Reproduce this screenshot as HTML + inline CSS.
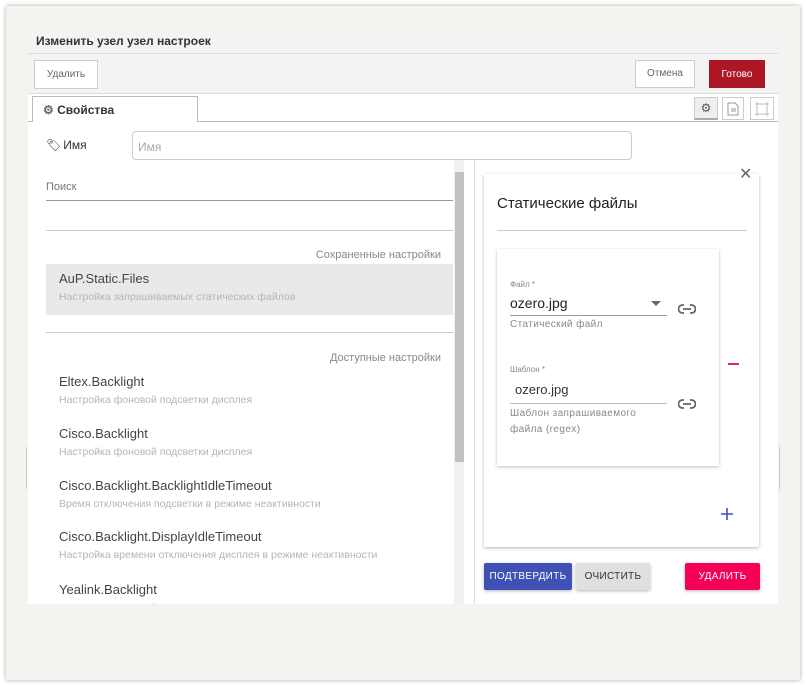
<!DOCTYPE html>
<html><head><meta charset="utf-8"><style>
*{box-sizing:border-box;margin:0;padding:0}
body{width:806px;height:685px;background:#fff;font-family:"Liberation Sans",Arial,sans-serif;position:relative;overflow:hidden}
.abs{position:absolute}
.frame{left:6px;top:6px;width:794px;height:674px;background:#f4f3f0;box-shadow:0 0 4px rgba(0,0,0,.35)}
.hdr{left:28px;top:26px;width:750px;height:28px;background:#f3f3f3;border-bottom:1px solid #ddd;font-size:12px;font-weight:bold;color:#333;padding:8px 0 0 8px}
.bar{left:28px;top:54px;width:750px;height:40px;background:#f3f3f3;border-bottom:1px solid #ddd}
.btn{position:absolute;background:#fff;border:1px solid #ccc;font-size:10px;color:#666;text-align:center}
.tabs{left:28px;top:94px;width:750px;height:28px;background:#fff;border-bottom:1px solid #bbb}
.content{left:28px;top:122px;width:750px;height:482px;background:#fff}
.item{position:absolute;left:59px}
.item .t{font-size:13px;color:#444}
.item .s{font-size:10.5px;color:#b5b5b5;margin-top:5px}
.rb{position:absolute;height:27px;border-radius:2px;font-size:10px;font-weight:bold;text-align:center;line-height:27px;box-shadow:0 1px 3px rgba(0,0,0,.3);letter-spacing:.3px}
</style></head><body>
<div class="abs frame"></div>
<div class="abs hdr">Изменить узел узел настроек</div>
<div class="abs bar"></div>
<div class="btn" style="left:34px;top:60px;width:64px;height:29px;line-height:27px">Удалить</div>
<div class="btn" style="left:635px;top:60px;width:60px;height:28px;line-height:26px">Отмена</div>
<div class="btn" style="left:709px;top:60px;width:56px;height:28px;line-height:28px;background:#ad1625;border-color:#ad1625;color:#fff">Готово</div>
<div class="abs tabs"></div>
<div class="abs" style="left:32px;top:96px;width:166px;height:27px;background:#fff;border:1px solid #bbb;border-bottom:none;font-size:12px;font-weight:bold;color:#333;padding:6px 0 0 10px"><span style="color:#666">⚙</span> Свойства</div>
<div class="btn" style="left:694px;top:97px;width:24px;height:23px;background:#eee;line-height:21px;color:#555;font-size:12px;border-bottom:2px solid #aaa">⚙</div>
<div class="btn" style="left:722px;top:97px;width:22px;height:23px"><svg width="12" height="14" style="margin-top:4px" viewBox="0 0 12 14"><path d="M1 1h7l3 3v9H1z M4 7h5M4 9h5" fill="none" stroke="#999"/></svg></div>
<div class="btn" style="left:750px;top:97px;width:24px;height:23px"><svg width="14" height="14" style="margin-top:4px" viewBox="0 0 14 14"><rect x="2" y="2" width="10" height="10" fill="none" stroke="#999"/><path d="M0 2h14M0 12h14M2 0v14M12 0v14" stroke="#bbb"/></svg></div>
<div class="abs content"></div>
<div class="abs" style="left:46px;top:138px;font-size:12px;color:#333">🏷︎<span style="margin-left:2px">Имя</span></div>
<div class="abs" style="left:132px;top:131px;width:500px;height:29px;border:1px solid #ccc;border-radius:4px;font-size:12px;color:#aaa;padding:8px 0 0 5px">Имя</div>
<div class="abs" style="left:46px;top:181px;font-size:11px;color:#777">Поиск</div>
<div class="abs" style="left:46px;top:200px;width:407px;border-top:1px solid #999"></div>
<div class="abs" style="left:46px;top:230px;width:407px;border-top:1px solid #ccc"></div>
<div class="abs" style="right:365px;top:249px;font-size:11px;color:#888">Сохраненные настройки</div>
<div class="abs" style="left:46px;top:264px;width:407px;height:51px;background:#e9e9e9"></div>
<div class="item" style="top:271px"><div class="t">AuP.Static.Files</div><div class="s">Настройка запрашиваемых статических файлов</div></div>
<div class="abs" style="left:46px;top:332px;width:408px;border-top:1px solid #ccc"></div>
<div class="abs" style="right:365px;top:352px;font-size:11px;color:#888">Доступные настройки</div>
<div class="item" style="top:374px"><div class="t">Eltex.Backlight</div><div class="s">Настройка фоновой подсветки дисплея</div></div>
<div class="item" style="top:426px"><div class="t">Cisco.Backlight</div><div class="s">Настройка фоновой подсветки дисплея</div></div>
<div class="item" style="top:478px"><div class="t">Cisco.Backlight.BacklightIdleTimeout</div><div class="s">Время отключения подсветки в режиме неактивности</div></div>
<div class="item" style="top:529px"><div class="t">Cisco.Backlight.DisplayIdleTimeout</div><div class="s">Настройка времени отключения дисплея в режиме неактивности</div></div>
<div class="item" style="top:582px"><div class="t">Yealink.Backlight</div><div class="s">Настройка фоновой подсветки дисплея</div></div>
<div class="abs" style="left:28px;top:604px;width:750px;height:76px;background:#f4f3f0"></div>
<div class="abs" style="left:454px;top:160px;width:10px;height:444px;background:#f1f1f1"></div>
<div class="abs" style="left:455px;top:172px;width:9px;height:290px;background:#c1c1c1"></div>
<div class="abs" style="left:474px;top:160px;height:444px;border-left:1px solid #ddd"></div>
<div class="abs" style="left:26px;top:447px;height:42px;border-left:1px solid #ccc"></div>
<div class="abs" style="left:779px;top:447px;height:42px;border-left:1px solid #ccc"></div>
<div class="abs" style="left:484px;top:174px;width:275px;height:373px;background:#fff;box-shadow:0 1px 3px rgba(0,0,0,.3);border-radius:2px"></div>
<div class="abs" style="left:739px;top:164px;font-size:16px;color:#666">✕</div>
<div class="abs" style="left:497px;top:195px;font-size:15px;color:#222">Статические файлы</div>
<div class="abs" style="left:497px;top:230px;width:250px;border-top:1px solid #ccc"></div>
<div class="abs" style="left:497px;top:249px;width:222px;height:217px;background:#fff;box-shadow:0 1px 3px rgba(0,0,0,.25)"></div>
<div class="abs" style="left:510px;top:280px;font-size:8px;color:#888">Файл *</div>
<div class="abs" style="left:510px;top:295px;font-size:14px;color:#222">ozero.jpg</div>
<div class="abs" style="left:651px;top:301px;width:0;height:0;border-left:5px solid transparent;border-right:5px solid transparent;border-top:5px solid #666"></div>
<div class="abs" style="left:510px;top:315px;width:157px;border-top:1px solid #999"></div>
<div class="abs" style="left:510px;top:319px;font-size:10px;color:#888;letter-spacing:.4px">Статический файл</div>
<div class="abs" style="left:510px;top:365px;font-size:8px;color:#888">Шаблон *</div>
<div class="abs" style="left:515px;top:382px;font-size:13px;color:#333">ozero.jpg</div>
<div class="abs" style="left:510px;top:403px;width:157px;border-top:1px solid #bbb"></div>
<div class="abs" style="left:510px;top:406px;font-size:10px;color:#888;letter-spacing:.4px;line-height:16px">Шаблон запрашиваемого<br>файла (regex)</div>
<svg class="abs" style="left:678px;top:303px" width="18" height="12" viewBox="0 0 18 12"><path d="M6 2H4.5a4 4 0 0 0 0 8H6M12 2h1.5a4 4 0 0 1 0 8H12M5 6h8" fill="none" stroke="#666" stroke-width="1.8"/></svg>
<svg class="abs" style="left:678px;top:398px" width="18" height="12" viewBox="0 0 18 12"><path d="M6 2H4.5a4 4 0 0 0 0 8H6M12 2h1.5a4 4 0 0 1 0 8H12M5 6h8" fill="none" stroke="#666" stroke-width="1.8"/></svg>
<div class="abs" style="left:728px;top:363px;width:11px;border-top:2px solid #e91e63"></div>
<svg class="abs" style="left:720px;top:507px" width="14" height="14" viewBox="0 0 14 14"><path d="M7 1v12M1 7h12" stroke="#3f51b5" stroke-width="1.6"/></svg>
<div class="rb" style="left:484px;top:563px;width:88px;background:#3f51b5;color:#fff;font-weight:normal">ПОДТВЕРДИТЬ</div>
<div class="rb" style="left:576px;top:563px;width:74px;background:#e0e0e0;color:#333;font-weight:normal">ОЧИСТИТЬ</div>
<div class="rb" style="left:685px;top:563px;width:75px;background:#f50057;color:#fff;font-weight:normal">УДАЛИТЬ</div>
</body></html>
